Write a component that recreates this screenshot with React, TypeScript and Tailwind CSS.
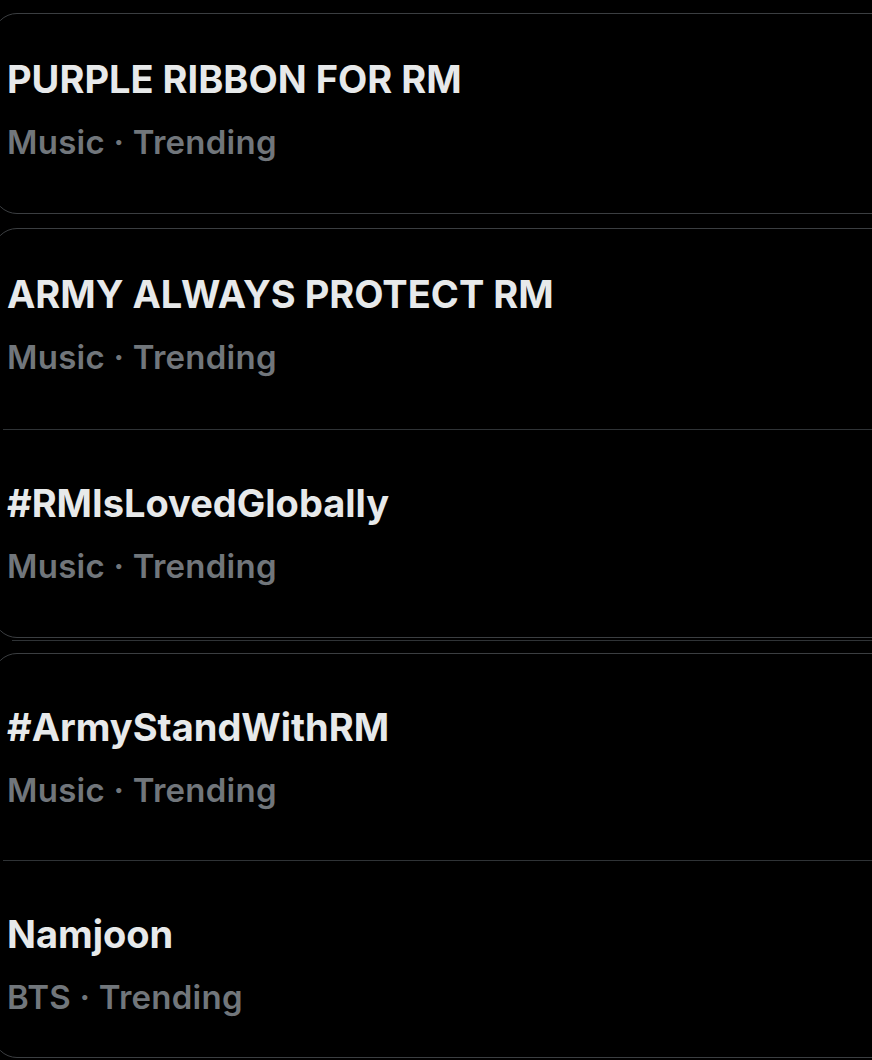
import React from 'react';

type Trend = {
  title: string;
  meta: string;
  pt: string;
  pb: string;
};

const cards: Trend[][] = [
  [{ title: 'PURPLE RIBBON FOR RM', meta: 'Music · Trending', pt: 'pt-[44px]', pb: 'pb-[51px]' }],
  [
    { title: 'ARMY ALWAYS PROTECT RM', meta: 'Music · Trending', pt: 'pt-[44px]', pb: 'pb-[52px]' },
    { title: '#RMIsLovedGlobally', meta: 'Music · Trending', pt: 'pt-[52px]', pb: 'pb-[51px]' },
  ],
  [
    { title: '#ArmyStandWithRM', meta: 'Music · Trending', pt: 'pt-[52px]', pb: 'pb-[50px]' },
    { title: 'Namjoon', meta: 'BTS · Trending', pt: 'pt-[52px]', pb: 'pb-[40px]' },
  ],
];

const TrendRow: React.FC<{ trend: Trend }> = ({ trend }) => (
  <div className={`pl-[13px] ${trend.pt} ${trend.pb}`}>
    <div className="text-[38px] leading-[42px] font-bold text-[#e7e9ea]">{trend.title}</div>
    <div className="mt-[22px] text-[33px] leading-[40px] font-semibold tracking-[0.25px] text-[#71767b]">{trend.meta}</div>
  </div>
);

const Card: React.FC<{ rows: Trend[]; className?: string }> = ({ rows, className }) => (
  <div className={`-ml-[7px] w-[940px] rounded-[24px] border border-[#3b3e41] ${className ?? ''}`}>
    {rows.map((row, i) => (
      <React.Fragment key={row.title}>
        {i > 0 && <div className="ml-[9px] h-px bg-[#2f3336]" />}
        <TrendRow trend={row} />
      </React.Fragment>
    ))}
  </div>
);

export default function App() {
  return (
    <div className="h-[1060px] overflow-hidden bg-black pt-[13px] font-[family-name:Inter,sans-serif]">
      <Card rows={cards[0]} />
      <Card rows={cards[1]} className="mt-[14px]" />
      <div className="ml-[12px] mt-[2px] h-px bg-[#2f3336]" />
      <Card rows={cards[2]} className="mt-[12px]" />
    </div>
  );
}
